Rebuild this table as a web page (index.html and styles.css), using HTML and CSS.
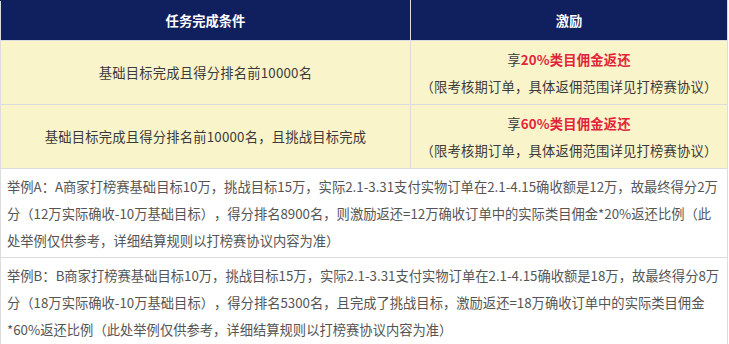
FILE: index.html
```html
<!DOCTYPE html>
<html lang="zh">
<head>
<meta charset="utf-8">
<link rel="stylesheet" href="styles.css">
</head>
<body>
<table class="rules">
  <thead>
    <tr>
      <th class="col-cond">任务完成条件</th>
      <th class="col-reward">激励</th>
    </tr>
  </thead>
  <tbody>
    <tr class="tier">
      <td>基础目标完成且得分排名前10000名</td>
      <td>
        <div class="reward">享<strong>20%类目佣金返还</strong></div>
        <div class="note">（限考核期订单，具体返佣范围详见打榜赛协议）</div>
      </td>
    </tr>
    <tr class="tier">
      <td>基础目标完成且得分排名前10000名，且挑战目标完成</td>
      <td>
        <div class="reward">享<strong>60%类目佣金返还</strong></div>
        <div class="note">（限考核期订单，具体返佣范围详见打榜赛协议）</div>
      </td>
    </tr>
    <tr class="example">
      <td colspan="2">举例A：A商家打榜赛基础目标10万，挑战目标15万，实际2.1-3.31支付实物订单在2.1-4.15确收额是12万，故最终得分2万分（12万实际确收-10万基础目标），得分排名8900名，则激励返还=12万确收订单中的实际类目佣金*20%返还比例（此处举例仅供参考，详细结算规则以打榜赛协议内容为准）</td>
    </tr>
    <tr class="example">
      <td colspan="2">举例B：B商家打榜赛基础目标10万，挑战目标15万，实际2.1-3.31支付实物订单在2.1-4.15确收额是18万，故最终得分8万分（18万实际确收-10万基础目标），得分排名5300名，且完成了挑战目标，激励返还=18万确收订单中的实际类目佣金*60%返还比例（此处举例仅供参考，详细结算规则以打榜赛协议内容为准）</td>
    </tr>
  </tbody>
</table>
</body>
</html>
```

FILE: styles.css
```css
html, body {
  margin: 0;
  padding: 0;
  background: #ffffff;
}

body {
  font-family: "Noto Sans CJK SC", sans-serif;
  font-size: 13.3px;
  color: #333333;
  text-spacing-trim: space-all;
}

.rules {
  width: 728px;
  border-collapse: collapse;
  table-layout: fixed;
}

.rules th,
.rules td {
  border: 1px solid #dcdcdc;
}

.rules th {
  background: #101f5e;
  color: #ffffff;
  font-weight: bold;
  height: 39px;
  padding: 0;
  text-align: center;
  border-top-color: #101f5e;
}

.col-cond {
  width: 409px;
}

.tier td {
  background: #faf4ca;
  text-align: center;
  height: 63px;
  padding: 0;
  color: #3a3a3a;
  letter-spacing: 0.2px;
}

.reward {
  line-height: 27px;
}

.reward strong {
  color: #e3243b;
  font-weight: bold;
}

.note {
  line-height: 27px;
}

.example td {
  background: #ffffff;
  color: #555555;
  line-height: 27px;
  padding: 4px 6px 3px 6px;
  text-align: left;
}
```
